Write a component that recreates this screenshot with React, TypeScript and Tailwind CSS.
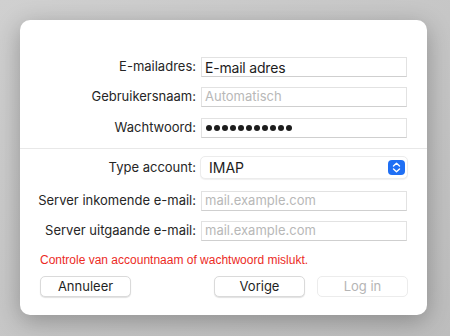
import React from 'react';

const font = { fontFamily: 'Inter, "Liberation Sans", sans-serif' };

function Label({ children }: { children: React.ReactNode }) {
  return <div className="w-[181px] pr-[5px] text-right text-[13px] text-[#262626]">{children}</div>;
}

function TextField({ value, placeholder }: { value?: string; placeholder?: string }) {
  return (
    <div className="flex h-[20px] w-[206px] items-center border border-[#e2e2e2] border-b-[#cfcfcf] bg-white pl-[3px]">
      {value ? (
        <span className="text-[14px] tracking-[-0.2px] text-[#1d1d1d]">{value}</span>
      ) : (
        <span className="text-[13px] text-[#b8b8b8]">{placeholder}</span>
      )}
    </div>
  );
}

function Row({ label, children, className = '' }: { label: string; children: React.ReactNode; className?: string }) {
  return (
    <div className={`flex items-center ${className}`}>
      <Label>{label}</Label>
      {children}
    </div>
  );
}

function Stepper() {
  return (
    <svg width="17" height="15" viewBox="0 0 17 15">
      <rect x="0" y="0" width="17" height="15" rx="4" fill="#1f6ff4" />
      <path d="M5.5 6 L8.5 3.2 L11.5 6" fill="none" stroke="#fff" strokeWidth="1.4" strokeLinecap="round" strokeLinejoin="round" />
      <path d="M5.5 9 L8.5 11.8 L11.5 9" fill="none" stroke="#fff" strokeWidth="1.4" strokeLinecap="round" strokeLinejoin="round" />
    </svg>
  );
}

function Button({ children, disabled }: { children: string; disabled?: boolean }) {
  return (
    <div
      className={`flex h-[21px] w-[91px] items-center justify-center rounded-[5px] border bg-white text-[13px] ${
        disabled
          ? 'border-[#ececec] text-[#b5b5b5]'
          : 'border-[#dadada] text-[#1f1f1f] shadow-[0_1px_1px_rgba(0,0,0,0.12)]'
      }`}
    >
      {children}
    </div>
  );
}

export default function App() {
  return (
    <div className="h-[336px] w-[450px] bg-gradient-to-br from-[#d0d0d0] to-[#bdbdbd] pl-[20px] pt-[20px]" style={font}>
      <div className="h-[295px] w-[407px] rounded-[10px] bg-white shadow-[0_6px_24px_rgba(0,0,0,0.28)]">
        <div className="flex flex-col pt-[37px]">
          <Row label="E-mailadres:">
            <TextField value="E-mail adres" />
          </Row>
          <Row label="Gebruikersnaam:" className="mt-[10px]">
            <TextField placeholder="Automatisch" />
          </Row>
          <Row label="Wachtwoord:" className="mt-[11px]">
            <div className="flex h-[20px] w-[206px] items-center gap-[2px] border border-[#e2e2e2] border-b-[#cfcfcf] bg-white pl-[4px]">
              {Array.from({ length: 11 }).map((_, i) => (
                <span key={i} className="h-[6px] w-[6px] rounded-full bg-[#1d1d1d]" />
              ))}
            </div>
          </Row>
        </div>

        <div className="mt-[10px] h-px bg-[#e8e8e8]" />

        <div className="flex flex-col">
          <Row label="Type account:" className="mt-[7px]">
            <div className="-ml-[1px] flex h-[23px] w-[208px] items-center justify-between rounded-[5px] border border-[#ececec] bg-white pl-[8px] pr-[2px] shadow-[0_1px_1px_rgba(0,0,0,0.06)]">
              <span className="text-[14px] text-[#1d1d1d]">IMAP</span>
              <Stepper />
            </div>
          </Row>
          <Row label="Server inkomende e-mail:" className="mt-[12px]">
            <TextField placeholder="mail.example.com" />
          </Row>
          <Row label="Server uitgaande e-mail:" className="mt-[10px]">
            <TextField placeholder="mail.example.com" />
          </Row>
        </div>

        <div
          className="mt-[11px] pl-[20px] text-[12px] leading-[16px] text-[#ec2b1f]"
          style={{ fontFamily: '"Liberation Sans", Arial, sans-serif' }}
        >
          Controle van accountnaam of wachtwoord mislukt.
        </div>

        <div className="mt-[8px] flex items-center justify-between pl-[20px] pr-[19px]">
          <Button>Annuleer</Button>
          <div className="flex gap-[12px]">
            <Button>Vorige</Button>
            <Button disabled>Log in</Button>
          </div>
        </div>
      </div>
    </div>
  );
}
